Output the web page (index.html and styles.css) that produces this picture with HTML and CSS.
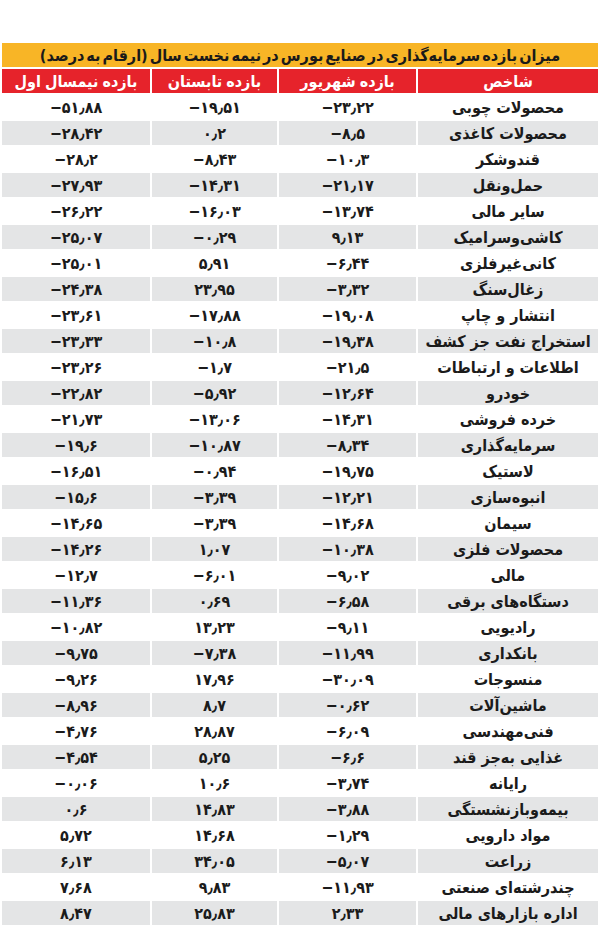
FILE: index.html
```html
<!DOCTYPE html>
<html lang="fa" dir="rtl">
<head>
<meta charset="utf-8">
<title>میزان بازده سرمایه‌گذاری در صنایع بورس</title>
<link rel="stylesheet" href="styles.css">
</head>
<body>
<table class="returns">
  <colgroup>
    <col class="c1">
    <col class="c2">
    <col class="c3">
    <col class="c4">
  </colgroup>
  <thead>
    <tr><th class="title" colspan="4">میزان بازده سرمایه‌گذاری در صنایع بورس در نیمه نخست سال (ارقام به درصد)</th></tr>
    <tr class="head">
      <th>شاخص</th>
      <th>بازده شهریور</th>
      <th>بازده تابستان</th>
      <th>بازده نیمسال اول</th>
    </tr>
  </thead>
  <tbody>
    <tr><td>محصولات چوبی</td><td class="num">−۲۳٫۲۲</td><td class="num">−۱۹٫۵۱</td><td class="num">−۵۱٫۸۸</td></tr>
    <tr><td>محصولات کاغذی</td><td class="num">−۸٫۵</td><td class="num">۰٫۲</td><td class="num">−۲۸٫۴۲</td></tr>
    <tr><td>قندوشکر</td><td class="num">−۱۰٫۳</td><td class="num">−۸٫۴۳</td><td class="num">−۲۸٫۲</td></tr>
    <tr><td>حمل‌ونقل</td><td class="num">−۲۱٫۱۷</td><td class="num">−۱۴٫۳۱</td><td class="num">−۲۷٫۹۳</td></tr>
    <tr><td>سایر مالی</td><td class="num">−۱۳٫۷۴</td><td class="num">−۱۶٫۰۳</td><td class="num">−۲۶٫۲۲</td></tr>
    <tr><td>کاشی‌وسرامیک</td><td class="num">۹٫۱۳</td><td class="num">−۰٫۲۹</td><td class="num">−۲۵٫۰۷</td></tr>
    <tr><td>کانی‌غیرفلزی</td><td class="num">−۶٫۴۴</td><td class="num">۵٫۹۱</td><td class="num">−۲۵٫۰۱</td></tr>
    <tr><td>زغال‌سنگ</td><td class="num">−۳٫۳۲</td><td class="num">۲۳٫۹۵</td><td class="num">−۲۴٫۳۸</td></tr>
    <tr><td>انتشار و چاپ</td><td class="num">−۱۹٫۰۸</td><td class="num">−۱۷٫۸۸</td><td class="num">−۲۳٫۶۱</td></tr>
    <tr><td>استخراج نفت جز کشف</td><td class="num">−۱۹٫۳۸</td><td class="num">−۱۰٫۸</td><td class="num">−۲۳٫۳۳</td></tr>
    <tr><td>اطلاعات و ارتباطات</td><td class="num">−۲۱٫۵</td><td class="num">−۱٫۷</td><td class="num">−۲۳٫۲۶</td></tr>
    <tr><td>خودرو</td><td class="num">−۱۲٫۶۴</td><td class="num">−۵٫۹۲</td><td class="num">−۲۲٫۸۲</td></tr>
    <tr><td>خرده فروشی</td><td class="num">−۱۴٫۳۱</td><td class="num">−۱۳٫۰۶</td><td class="num">−۲۱٫۷۳</td></tr>
    <tr><td>سرمایه‌گذاری</td><td class="num">−۸٫۳۴</td><td class="num">−۱۰٫۸۷</td><td class="num">−۱۹٫۶</td></tr>
    <tr><td>لاستیک</td><td class="num">−۱۹٫۷۵</td><td class="num">−۰٫۹۴</td><td class="num">−۱۶٫۵۱</td></tr>
    <tr><td>انبوه‌سازی</td><td class="num">−۱۲٫۲۱</td><td class="num">−۳٫۳۹</td><td class="num">−۱۵٫۶</td></tr>
    <tr><td>سیمان</td><td class="num">−۱۴٫۶۸</td><td class="num">−۳٫۳۹</td><td class="num">−۱۴٫۶۵</td></tr>
    <tr><td>محصولات فلزی</td><td class="num">−۱۰٫۳۸</td><td class="num">۱٫۰۷</td><td class="num">−۱۴٫۲۶</td></tr>
    <tr><td>مالی</td><td class="num">−۹٫۰۲</td><td class="num">−۶٫۰۱</td><td class="num">−۱۲٫۷</td></tr>
    <tr><td>دستگاه‌های برقی</td><td class="num">−۶٫۵۸</td><td class="num">۰٫۶۹</td><td class="num">−۱۱٫۳۶</td></tr>
    <tr><td>رادیویی</td><td class="num">−۹٫۱۱</td><td class="num">۱۳٫۲۳</td><td class="num">−۱۰٫۸۲</td></tr>
    <tr><td>بانکداری</td><td class="num">−۱۱٫۹۹</td><td class="num">−۷٫۳۸</td><td class="num">−۹٫۷۵</td></tr>
    <tr><td>منسوجات</td><td class="num">−۳۰٫۰۹</td><td class="num">۱۷٫۹۶</td><td class="num">−۹٫۲۶</td></tr>
    <tr><td>ماشین‌آلات</td><td class="num">−۰٫۶۲</td><td class="num">۸٫۷</td><td class="num">−۸٫۹۶</td></tr>
    <tr><td>فنی‌مهندسی</td><td class="num">−۶٫۰۹</td><td class="num">۲۸٫۸۷</td><td class="num">−۴٫۷۶</td></tr>
    <tr><td>غذایی به‌جز قند</td><td class="num">−۶٫۶</td><td class="num">۵٫۲۵</td><td class="num">−۴٫۵۴</td></tr>
    <tr><td>رایانه</td><td class="num">−۳٫۷۴</td><td class="num">۱۰٫۶</td><td class="num">−۰٫۰۶</td></tr>
    <tr><td>بیمه‌وبازنشستگی</td><td class="num">−۳٫۸۸</td><td class="num">۱۴٫۸۳</td><td class="num">۰٫۶</td></tr>
    <tr><td>مواد دارویی</td><td class="num">−۱٫۲۹</td><td class="num">۱۴٫۶۸</td><td class="num">۵٫۷۲</td></tr>
    <tr><td>زراعت</td><td class="num">−۵٫۰۷</td><td class="num">۳۴٫۰۵</td><td class="num">۶٫۱۳</td></tr>
    <tr><td>چندرشته‌ای صنعتی</td><td class="num">−۱۱٫۹۳</td><td class="num">۹٫۸۳</td><td class="num">۷٫۶۸</td></tr>
    <tr><td>اداره بازارهای مالی</td><td class="num">۲٫۳۳</td><td class="num">۲۵٫۸۳</td><td class="num">۸٫۴۷</td></tr>
  </tbody>
</table>
</body>
</html>
```
FILE: styles.css
```css
html, body {
  margin: 0;
  padding: 0;
  background: #ffffff;
}

body {
  padding-top: 41px;
  font-family: "DejaVu Sans Condensed", "DejaVu Sans", sans-serif;
  color: #1b1b1b;
}

.returns {
  width: 600px;
  border-collapse: separate;
  border-spacing: 2px;
  table-layout: fixed;
}

.c1 { width: 180px; }
.c2 { width: 137px; }
.c3 { width: 125px; }
.c4 { width: 148px; }

.returns th,
.returns td {
  padding: 0;
  text-align: center;
  vertical-align: middle;
  white-space: nowrap;
  overflow: hidden;
}

.title {
  height: 24px;
  background: #f8b526;
  color: #1a1a1a;
  font-size: 16px;
  font-weight: bold;
  word-spacing: -3px;
}

.head th {
  height: 24px;
  background: #e6232b;
  color: #ffffff;
  font-size: 16px;
  font-weight: bold;
  word-spacing: -1px;
}

.returns td {
  height: 24px;
  font-size: 16px;
  font-weight: bold;
}

.returns tbody tr:nth-child(even) td {
  background: #e4e5e6;
}

.num {
  direction: ltr;
  unicode-bidi: bidi-override;
  font-size: 17px;
}
```
